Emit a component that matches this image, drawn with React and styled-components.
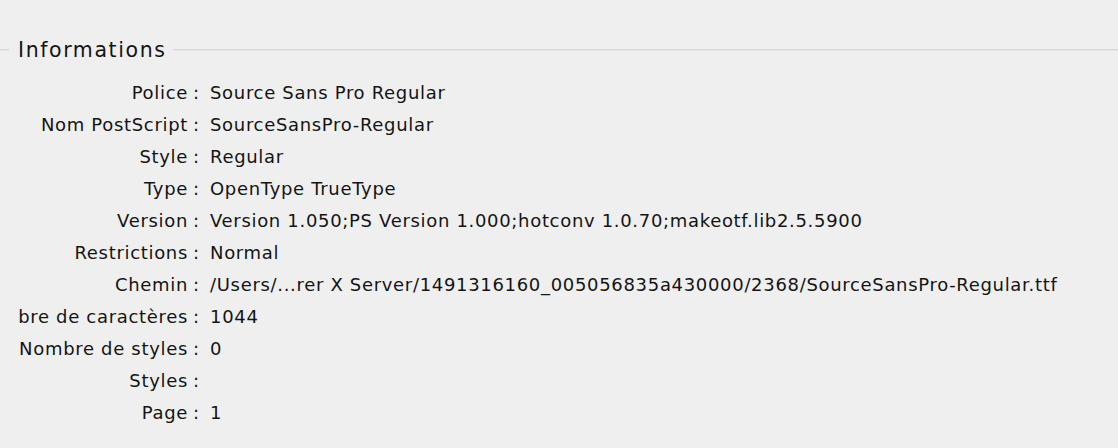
import React from "react";
import styled, { createGlobalStyle } from "styled-components";

const GlobalStyle = createGlobalStyle`
  html, body {
    margin: 0;
    padding: 0;
    background: #efefef;
  }
  body {
    font-family: "DejaVu Sans", "Liberation Sans", sans-serif;
    color: #141414;
  }
`;

const Panel = styled.div`
  width: 1118px;
  height: 448px;
  padding-top: 38px;
  box-sizing: border-box;
  overflow: hidden;
`;

const Header = styled.div`
  display: flex;
  align-items: center;
  height: 24px;
  margin-bottom: 14px;
`;

const Rule = styled.div`
  height: 1px;
  border-top: 1px solid #d6d6d6;
  background: #e6e6e6;
  flex: ${(p) => (p.$grow ? 1 : "none")};
  width: ${(p) => (p.$grow ? "auto" : "9px")};
`;

const Title = styled.span`
  font-size: 20.5px;
  letter-spacing: 1.6px;
  padding: 0 6px 0 9px;
  line-height: 24px;
`;

const Rows = styled.div`
  display: flex;
  flex-direction: column;
`;

const Row = styled.div`
  display: flex;
  align-items: center;
  height: 32px;
  font-size: 18px;
  letter-spacing: 0.68px;
`;

const Label = styled.div`
  width: 169px;
  margin-left: 19px;
  display: flex;
  justify-content: flex-end;
  overflow: hidden;
  white-space: nowrap;
`;

const Colon = styled.span`
  width: 22px;
  padding-left: 5px;
  box-sizing: border-box;
  flex: none;
`;

const Value = styled.span`
  white-space: nowrap;
`;

const infos = [
  ["Police", "Source Sans Pro Regular"],
  ["Nom PostScript", "SourceSansPro-Regular"],
  ["Style", "Regular"],
  ["Type", "OpenType TrueType"],
  ["Version", "Version 1.050;PS Version 1.000;hotconv 1.0.70;makeotf.lib2.5.5900"],
  ["Restrictions", "Normal"],
  ["Chemin", "/Users/...rer X Server/1491316160_005056835a430000/2368/SourceSansPro-Regular.ttf"],
  ["Nombre de caractères", "1044"],
  ["Nombre de styles", "0"],
  ["Styles", ""],
  ["Page", "1"],
];

const App = () => {
  return (
    <Panel>
      <GlobalStyle />
      <Header>
        <Rule />
        <Title>Informations</Title>
        <Rule $grow />
      </Header>
      <Rows>
        {infos.map(([label, value]) => (
          <Row key={label}>
            <Label>
              <span>{label}</span>
            </Label>
            <Colon>:</Colon>
            <Value>{value}</Value>
          </Row>
        ))}
      </Rows>
    </Panel>
  );
};

export default App;
